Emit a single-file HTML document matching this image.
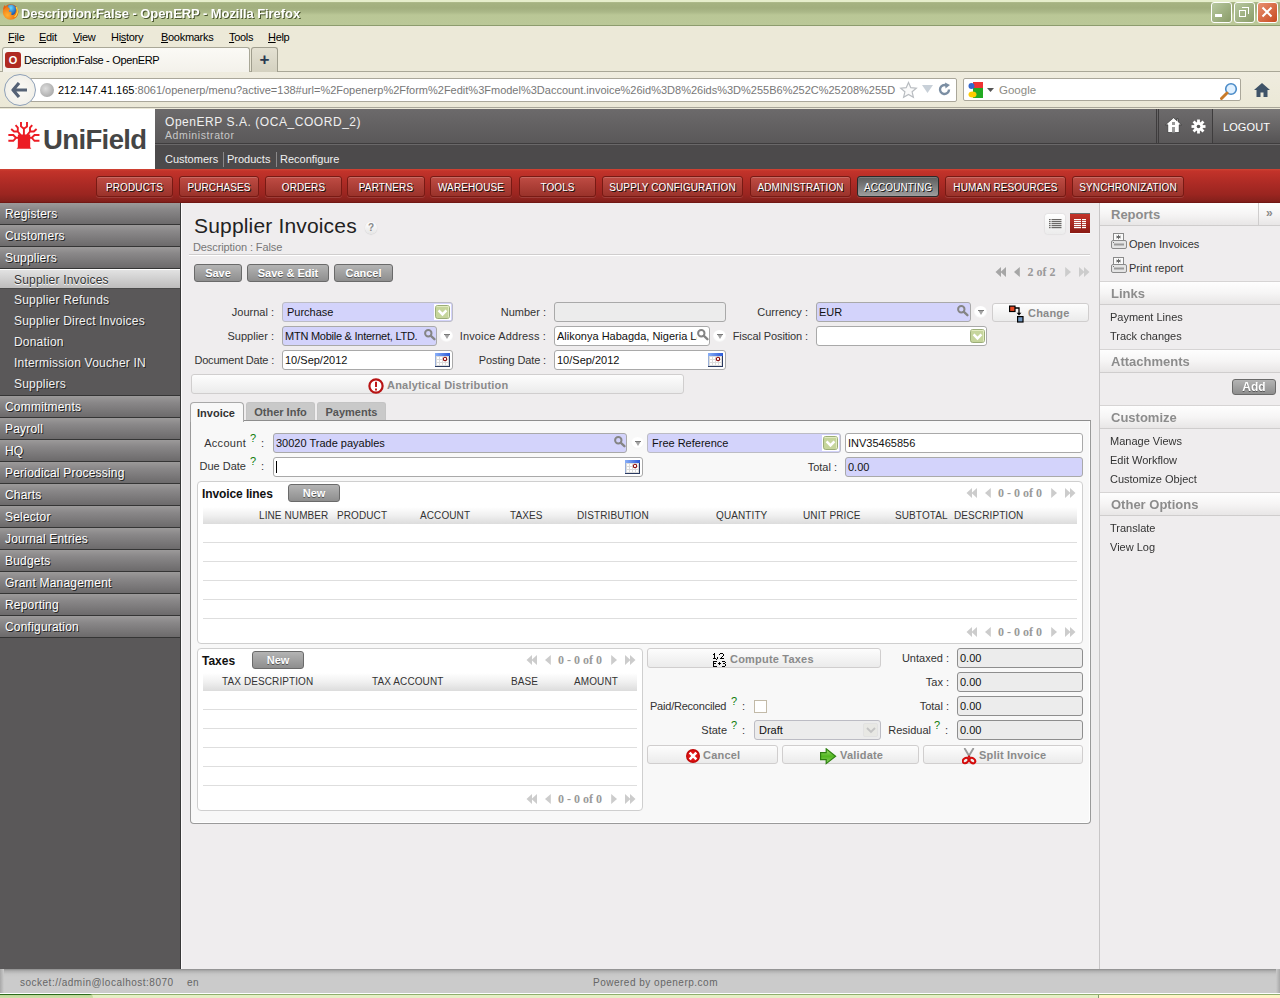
<!DOCTYPE html>
<html><head><meta charset="utf-8">
<style>
*{margin:0;padding:0;box-sizing:border-box}
html,body{width:1280px;height:998px;overflow:hidden;background:#efedee;font-family:"Liberation Sans",sans-serif;font-size:12px;color:#333}
.abs{position:absolute}
#titlebar{position:absolute;left:0;top:0;width:1280px;height:26px;background:linear-gradient(#e6eecc 0,#e6eecc 2px,#b4c092 2px,#a5b281 3px,#a2af7e 8px,#abb888 12px,#bac796 15px,#bbc898 25px);border-bottom:1px solid #8d9c6e}
#menubar{position:absolute;left:0;top:26px;width:1280px;height:22px;background:#ece9d8}
#tabstrip{position:absolute;left:0;top:47px;width:1280px;height:26px;background:#ece9d8}
#navbar{position:absolute;left:0;top:72px;width:1280px;height:37px;background:linear-gradient(#efecdf,#ebe8d6);}
#header{position:absolute;left:0;top:109px;width:1280px;height:60px;background:#4f4d4e}
#logo{position:absolute;left:0;top:0;width:155px;height:60px;background:#fff}
#hdrtop{position:absolute;left:155px;top:0;width:1125px;height:35px;background:linear-gradient(#6c6a6b,#5a5859);border-bottom:1px solid #3f3d3e}
#hdrbot{position:absolute;left:155px;top:35px;width:1125px;height:25px;background:#4c4a4b;border-top:1px solid #6a6869}
#redbar{position:absolute;left:0;top:169px;width:1280px;height:34px;background:linear-gradient(#d24434 0,#c3332a 2px,#ae2b25 40%,#9a2520 75%,#84201b 95%,#6a1410 100%)}
#left{position:absolute;left:0;top:203px;width:181px;height:766px;background:#5a5859;border-right:1px solid #383838}
.lm{position:relative;height:22px;border-bottom:1px solid #353535;background:linear-gradient(#9c9a9a,#8a8889 30%,#6c6a6b);color:#fff;font-size:12px;padding-left:5px;line-height:23px;letter-spacing:0.2px;text-shadow:1px 1px 0 #222;white-space:nowrap}
.ls{position:relative;height:21px;color:#f2f2f2;font-size:12px;padding-left:14px;line-height:23px;letter-spacing:0.2px;text-shadow:1px 1px 0 #2a2a2a;white-space:nowrap}
.ls.sel{height:20px;margin-top:0;border-top:1px solid #fff;background:linear-gradient(#e2e2e2,#bdbcbc);color:#333;text-shadow:0 1px 0 #fff;line-height:21px;border-bottom:1px solid #4a4a4a}
#content{position:absolute;left:181px;top:203px;width:918px;height:766px;background:#efedee;border-left:1px solid #fdfbfc}
#right{position:absolute;left:1099px;top:203px;width:181px;height:766px;background:#efedee;border-left:1px solid #c8c6c7}
#footer{position:absolute;left:0;top:969px;width:1280px;height:25px;background:linear-gradient(#8c8c8c 0,#b0b0b0 2px,#c6c6c6 5px,#cbcbcb 8px,#cbcbcb 100%);border-bottom:1px solid #fff}
#taskbar{position:absolute;left:0;top:994px;width:1280px;height:4px;background:#e6efc6;border-top:1px solid #8fae6c}
.wbtn{position:absolute;top:2px;width:21px;height:21px;border:1.5px solid #fff;border-radius:3px}
.mi{position:absolute;top:5px;font-size:11px;color:#000;letter-spacing:-0.3px}
.mb{position:absolute;top:7px;height:21px;border:1px solid #781a14;border-radius:3px;background:linear-gradient(#bf4c44,#9a322a);box-shadow:inset 0 1px 0 rgba(255,255,255,0.18),0 1px 0 rgba(255,255,255,0.12);color:#fff;font:10px 'Liberation Sans',sans-serif;text-align:center;line-height:21px;text-shadow:1px 1px 0 #111;white-space:nowrap;letter-spacing:0.1px}
.mb.act{background:linear-gradient(#5c5c5c,#9e9e9e);border-color:#2a2a2a}
.rh{position:absolute;left:0;width:181px;height:24px;border-top:1px solid #d6d4d4;border-bottom:1px solid #cfcdcd;background:linear-gradient(#fefefe,#f6f5f5 50%,#e8e6e6);font:bold 13px 'Liberation Sans',sans-serif;color:#8c8c8c;padding-left:11px;line-height:23px;letter-spacing:0px}
.ri{position:absolute;font-size:11px;color:#333;white-space:nowrap}
.btn{position:absolute;border:1px solid #6a6a6a;border-radius:3px;background:linear-gradient(#b4b4b4,#8e8e8e);color:#fff;font:bold 12px 'Liberation Sans',sans-serif;text-align:center;text-shadow:0 1px 0 #555;white-space:nowrap}
.lb{position:absolute;font-size:11px;color:#333;white-space:nowrap}
.q2{color:#0c7c0c}
.q{color:#1a8a1a;font-size:11px;position:relative;top:-3px;margin-left:6px}
.in{position:absolute;border:1px solid #a9a9a9;border-radius:3px;font-size:11px;color:#111;padding:3px 0 0 2px;white-space:nowrap;overflow:visible}
.in.lav{background:#d3d3fb}
.in.sel{padding-left:4px;border-color:#bcbcc4}
.in.wh{background:#fff}
.in.ro{background:#ececec}
.in.ro2{background:#ececec;border-color:#8e8e8e}
.ddc{width:13px;height:12px;border-radius:50%;background:radial-gradient(circle at 50% 40%,#fff 55%,#ececec 85%,#dcdcdc);}
.gsel{width:16px;height:15px;background:linear-gradient(#b4c898,#8fa872);border:1px solid #dfe8d4;border-radius:1px}
.pg{width:112px;height:12px}
.pgt{font:bold 12px 'Liberation Serif',serif;color:#9a9a9a;white-space:nowrap}
.abtn{position:absolute;border:1px solid #d0cece;border-radius:3px;background:linear-gradient(#fdfdfd,#ebebeb);font:bold 11px 'Liberation Sans',sans-serif;color:#8a8a8a;white-space:nowrap;letter-spacing:0.2px}
.tab{border:1px solid #c4c4c4;border-bottom:none;border-radius:3px 3px 0 0;background:#c9c9c9;font:bold 11px 'Liberation Sans',sans-serif;color:#555;text-align:center;line-height:19px}
.tab.act{background:#f8f8f8;border-color:#a8a8a8;color:#333;line-height:22px;border-radius:4px 4px 0 0}
.box{border:1px solid #cfcfcf;border-radius:4px;background:#fff}
.thd{background:linear-gradient(#fff,#f0f0f0 50%,#dcdcdc)}
.th{font-size:10px;color:#333;letter-spacing:0.1px;white-space:nowrap}
.ft{font-size:10px;color:#666;letter-spacing:0.5px;white-space:nowrap}
</style></head><body><div id="wrap" style="position:absolute;left:0;top:0;width:1280px;height:998px;overflow:hidden;will-change:transform">
<div id="titlebar">
 <svg class="abs" style="left:2px;top:4px" width="17" height="16" viewBox="0 0 17 16"><defs><radialGradient id="fo" cx="0.3" cy="0.7" r="0.8"><stop offset="0" stop-color="#ffb030"/><stop offset="0.6" stop-color="#f07a18"/><stop offset="1" stop-color="#c8400a"/></radialGradient><radialGradient id="gb" cx="0.4" cy="0.3" r="0.7"><stop offset="0" stop-color="#6ad8ff"/><stop offset="1" stop-color="#1a58b0"/></radialGradient></defs><circle cx="8.6" cy="8" r="7.8" fill="url(#fo)"/><path d="M5.5 2.2C7 0.4 11 0.2 13.2 2.4 14.6 4.2 14.2 8 12.6 10 11 11.6 8.5 11 9.4 9.4 10.2 8 8.6 7.4 7.2 7.8 6.2 6.8 7.4 5.2 8.2 5.4 7.6 4 6.2 3.6 5.5 2.2Z" fill="url(#gb)"/><path d="M14.2 3.2C16.2 6.2 15.6 10.6 12.6 13" stroke="#ffd840" stroke-width="1.4" fill="none"/><path d="M1.2 6C1 3.5 2 2 3 1L3.6 3.4Z" fill="#e86010"/></svg>
 <div class="abs" style="left:21px;top:6px;font:bold 13px 'Liberation Sans',sans-serif;color:#fff;text-shadow:1px 1px 0 #4a5530;letter-spacing:-0.07px">Description:False - OpenERP - Mozilla Firefox</div>
 <div class="wbtn" style="left:1211px;background:linear-gradient(135deg,#b8c8a0,#8a9c68)"><div class="abs" style="left:3px;top:11px;width:7px;height:3px;background:#fff"></div></div>
 <div class="wbtn" style="left:1234px;background:linear-gradient(135deg,#b8c8a0,#8a9c68)"><div class="abs" style="left:3.5px;top:7px;width:7.5px;height:7px;border:1.5px solid #fff"></div><div class="abs" style="left:6.5px;top:4px;width:7.5px;height:7px;border-top:1.5px solid #fff;border-right:1.5px solid #fff"></div></div>
 <div class="wbtn" style="left:1257px;background:linear-gradient(135deg,#e89070,#c84a20)"><svg class="abs" style="left:2px;top:2px" width="14" height="14"><path d="M2.5 2.5L11.5 11.5M11.5 2.5L2.5 11.5" stroke="#fff" stroke-width="2"/></svg></div></div>
</div>
<div id="menubar">
 <span class="mi" style="left:8px"><u>F</u>ile</span><span class="mi" style="left:39px"><u>E</u>dit</span><span class="mi" style="left:73px"><u>V</u>iew</span><span class="mi" style="left:111px">Hi<u>s</u>tory</span><span class="mi" style="left:161px"><u>B</u>ookmarks</span><span class="mi" style="left:229px"><u>T</u>ools</span><span class="mi" style="left:268px"><u>H</u>elp</span>
</div>
<div id="tabstrip">
 <div class="abs" style="left:0;top:0;width:1280px;height:25px;border-bottom:1px solid #a9a797"></div>
 <div class="abs" style="left:2px;top:0;width:248px;height:26px;background:linear-gradient(#fbfaf6,#f3f1ea);border:1px solid #a9a797;border-bottom:none;border-radius:3px 3px 0 0"></div>
 <div class="abs" style="left:5px;top:5px;width:16px;height:16px;background:#b02a22;border-radius:3px;color:#fff;font:bold 11px 'Liberation Sans',sans-serif;text-align:center;line-height:16px">O</div>
 <div class="abs" style="left:24px;top:7px;font-size:11px;color:#000;letter-spacing:-0.33px">Description:False - OpenERP</div>
 <div class="abs" style="left:251px;top:0px;width:27px;height:25px;background:linear-gradient(#e4e1d2,#d4d1c0);border:1px solid #a09e8e;border-bottom:none;border-radius:3px 3px 0 0;color:#2a3a50;font:bold 17px 'Liberation Sans',sans-serif;text-align:center;line-height:23px">+</div>
</div>
<div id="navbar">
 <div class="abs" style="left:30px;top:6px;width:927px;height:24px;background:#fff;border:1px solid #aaa79a;border-radius:0 2px 2px 0"></div>
 <div class="abs" style="left:4px;top:2px;width:32px;height:32px;border-radius:50%;background:radial-gradient(#fbfaf6,#eeece4);border:1px solid #8ea0b8"></div>
 <svg class="abs" style="left:11px;top:10px" width="18" height="16"><path d="M8 1L2 8L8 15M2 8H16" stroke="#556275" stroke-width="3.2" fill="none" stroke-linejoin="round"/></svg>
 <div class="abs" style="left:40px;top:11px;width:14px;height:14px;border-radius:50%;background:radial-gradient(circle at 40% 40%,#ddd,#9a9a9a)"></div>
 <div class="abs" style="left:58px;top:12px;font-size:11px;color:#000;white-space:nowrap;width:838px;overflow:hidden">212.147.41.165<span style="color:#777">:8061/openerp/menu?active=138#url=%2Fopenerp%2Fform%2Fedit%3Fmodel%3Daccount.invoice%26id%3D8%26ids%3D%255B6%252C%25208%255D</span></div>
 <svg class="abs" style="left:899px;top:9px" width="19" height="18"><path d="M9.5 1.5L11.8 6.7 17.3 7.2 13.1 10.8 14.4 16.3 9.5 13.4 4.6 16.3 5.9 10.8 1.7 7.2 7.2 6.7Z" fill="#fafafa" stroke="#b8bcc0" stroke-width="1.2"/></svg>
 <svg class="abs" style="left:922px;top:13px" width="11" height="9"><path d="M0 0H11L5.5 8Z" fill="#c8d0d8"/></svg>
 <svg class="abs" style="left:937px;top:10px" width="15" height="15"><path d="M12 7.5A4.5 4.5 0 1 1 9.5 3.5" stroke="#7b8ea3" stroke-width="2.4" fill="none"/><path d="M8 0.5L13 3 8.5 6.5Z" fill="#7b8ea3"/></svg>
 <div class="abs" style="left:963px;top:6px;width:278px;height:23px;background:#fff;border:1px solid #aaa79a;border-radius:2px"></div>
 <svg class="abs" style="left:968px;top:10px" width="16" height="16"><rect x="5" y="0" width="10" height="9" fill="#e33"/><rect x="5" y="6" width="10" height="10" fill="#2a2"/><circle cx="3.5" cy="4" r="3" fill="#36c"/><ellipse cx="4.5" cy="12.5" rx="4" ry="3" fill="#fc0"/></svg>
 <svg class="abs" style="left:987px;top:16px" width="7" height="4"><path d="M0 0H7L3.5 4Z" fill="#555"/></svg>
 <div class="abs" style="left:999px;top:12px;font-size:11.5px;color:#8c8c84">Google</div>
 <svg class="abs" style="left:1220px;top:10px" width="18" height="18"><circle cx="11" cy="7" r="5.3" fill="#dff0ff" stroke="#4a8bc8" stroke-width="1.6"/><path d="M7 11L1.5 16.5" stroke="#c87a28" stroke-width="3" stroke-linecap="round"/></svg>
 <svg class="abs" style="left:1254px;top:11px" width="16" height="14"><path d="M8 0L0 7H2.5V14H6.5V9.5H9.5V14H13.5V7H16Z" fill="#3f5368"/></svg>
 <div class="abs" style="left:0;top:35px;width:1280px;height:1px;background:#a8a598"></div>
</div>
<div id="header"><div id="logo">
 <svg class="abs" style="left:5px;top:11px" width="40" height="32" viewBox="0 0 40 32"><g fill="none" stroke="#ec1c24" stroke-width="1.9" stroke-linecap="square" stroke-linejoin="miter"><path d="M16 3V6.4L18.9 8.7V15M22 3V6.4L18.9 8.7"/><path d="M11.2 5.9L12.8 7.7V11.5L15.2 14.6M12.8 11.5H9L6.9 9.6"/><path d="M26.6 5.9L25 7.7V11.5L22.6 14.6M25 11.5H28.8L30.9 9.6"/><path d="M4.3 15H8.3L11 17.8L8.3 20.8H4.3M11 17.8H13.5"/><path d="M33.5 15H29.5L26.8 17.8L29.5 20.8H33.5M26.8 17.8H24.5"/></g><path d="M12.9 14.6H25.2L25.2 27.3L26.4 28.8H11.6L12.8 27.3Z" fill="#ec1c24"/></svg>
 <div class="abs" style="left:43px;top:124px;top:15px;font:bold 27.5px 'Liberation Sans',sans-serif;color:#454545;letter-spacing:-0.62px">UniField</div>
</div>
<div id="hdrtop">
 <div class="abs" style="left:10px;top:6px;font-size:12px;color:#f0f0f0;letter-spacing:0.55px;white-space:nowrap">OpenERP S.A. (OCA_COORD_2)</div>
 <div class="abs" style="left:10px;top:20px;font-size:10.5px;color:#c8c8c8;letter-spacing:0.6px">Administrator</div>
 <div class="abs" style="left:1001px;top:0;width:1px;height:35px;background:#3e3c3d"></div>
 <div class="abs" style="left:1003px;top:0;width:1px;height:35px;background:#3e3c3d"></div>
 <div class="abs" style="left:1057px;top:0;width:1px;height:35px;background:#3e3c3d"></div>
 <div class="abs" style="left:1058px;top:0;width:67px;height:34px;background:linear-gradient(#7a7878,#555354)"></div>
 <svg class="abs" style="left:1010px;top:8px" width="17" height="17" viewBox="0 0 17 17"><path d="M8.5 0.8L0.5 7.8H2.8V15.5H14.2V7.8H16.5L13 4.6V1.5H12V3.7Z" fill="#fff" stroke="#222" stroke-width="0.6"/><rect x="7" y="10" width="3" height="5.5" fill="#999"/><rect x="7" y="5" width="3" height="3" fill="#999"/></svg>
 <svg class="abs" style="left:1036px;top:10px" width="15" height="15" viewBox="0 0 15 15"><g transform="translate(7.5 7.5)"><circle r="4.6" fill="#fff"/><g fill="#fff"><rect x="-1.4" y="-7" width="2.8" height="14"/><rect x="-1.4" y="-7" width="2.8" height="14" transform="rotate(45)"/><rect x="-1.4" y="-7" width="2.8" height="14" transform="rotate(90)"/><rect x="-1.4" y="-7" width="2.8" height="14" transform="rotate(135)"/></g><circle r="1.8" fill="#555"/></g></svg>
 <div class="abs" style="left:1068px;top:12px;font-size:11px;color:#fff;letter-spacing:0.1px">LOGOUT</div>
</div>
<div id="hdrbot">
 <div class="abs" style="left:10px;top:8px;font-size:11px;color:#f0f0f0;white-space:nowrap">Customers</div>
 <div class="abs" style="left:68px;top:7px;width:1px;height:15px;background:#8a8889"></div>
 <div class="abs" style="left:72px;top:8px;font-size:11px;color:#f0f0f0">Products</div>
 <div class="abs" style="left:121px;top:7px;width:1px;height:15px;background:#8a8889"></div>
 <div class="abs" style="left:125px;top:8px;font-size:11px;color:#f0f0f0">Reconfigure</div>
</div></div>
<div id="redbar">
 <div class="mb" style="left:96px;width:77px">PRODUCTS</div>
 <div class="mb" style="left:179px;width:80px">PURCHASES</div>
 <div class="mb" style="left:265px;width:77px">ORDERS</div>
 <div class="mb" style="left:347px;width:78px">PARTNERS</div>
 <div class="mb" style="left:430px;width:82px">WAREHOUSE</div>
 <div class="mb" style="left:519px;width:77px">TOOLS</div>
 <div class="mb" style="left:602px;width:141px">SUPPLY CONFIGURATION</div>
 <div class="mb" style="left:750px;width:101px">ADMINISTRATION</div>
 <div class="mb act" style="left:857px;width:82px">ACCOUNTING</div>
 <div class="mb" style="left:945px;width:121px">HUMAN RESOURCES</div>
 <div class="mb" style="left:1072px;width:112px">SYNCHRONIZATION</div>
</div>
<div id="left">
<div class="lm">Registers</div><div class="lm">Customers</div><div class="lm">Suppliers</div>
<div class="ls sel">Supplier Invoices</div><div class="ls">Supplier Refunds</div><div class="ls">Supplier Direct Invoices</div><div class="ls">Donation</div><div class="ls">Intermission Voucher IN</div><div class="ls">Suppliers</div><div style="height:1px"></div><div style="height:1px;background:#353535"></div>
<div class="lm">Commitments</div><div class="lm">Payroll</div><div class="lm">HQ</div><div class="lm">Periodical Processing</div><div class="lm">Charts</div><div class="lm">Selector</div><div class="lm">Journal Entries</div><div class="lm">Budgets</div><div class="lm">Grant Management</div><div class="lm">Reporting</div><div class="lm">Configuration</div>
</div>
<div id="content"></div>
<div class="abs" style="left:194px;top:214px;font-size:21px;color:#222;letter-spacing:0.17px;white-space:nowrap">Supplier Invoices</div>
<div class="abs" style="left:365px;top:222px;width:12px;height:12px;border-radius:50%;background:linear-gradient(#fff,#e6e6e6);box-shadow:0 0.5px 1px #c8c8c8;font:bold 10px 'Liberation Sans',sans-serif;color:#8a8a8a;text-align:center;line-height:12px">?</div>
<div class="abs" style="left:193px;top:241px;font-size:11px;color:#777;letter-spacing:-0.1px">Description : False</div>
<div class="abs" style="left:189px;top:254px;width:901px;height:1px;background:#cfcdcd"></div>
<div class="abs" style="left:189px;top:255px;width:901px;height:1px;background:#fff"></div>
<div class="btn" style="left:194px;top:264px;width:48px;height:18px;line-height:17px;font-size:11px">Save</div>
<div class="btn" style="left:247px;top:264px;width:82px;height:18px;line-height:17px;font-size:11px">Save &amp; Edit</div>
<div class="btn" style="left:334px;top:264px;width:59px;height:18px;line-height:17px;font-size:11px">Cancel</div>
<div class="abs" style="left:1045px;top:214px;width:20px;height:20px;border-radius:3px;background:linear-gradient(#fff,#ececec);box-shadow:0 0 1.5px #bbb"><svg class="abs" style="left:4px;top:5px" width="13" height="10"><g fill="#6a6866"><rect x="0" y="0" width="1.6" height="1.2"/><rect x="2.5" y="0" width="10" height="1.2"/><rect x="0" y="2" width="1.6" height="1.2"/><rect x="2.5" y="2" width="10" height="1.2"/><rect x="0" y="4" width="1.6" height="1.2"/><rect x="2.5" y="4" width="10" height="1.2"/><rect x="0" y="6" width="1.6" height="1.2"/><rect x="2.5" y="6" width="10" height="1.2"/><rect x="0" y="8" width="1.6" height="1.2"/><rect x="2.5" y="8" width="10" height="1.2"/></g></svg></div><div class="abs" style="left:1070px;top:213px;width:20px;height:20px;border-top:1px solid #6a7070;background:linear-gradient(#c4342a,#8a1a14);box-shadow:0 1px 0 #fff"><svg class="abs" style="left:4px;top:5px" width="13" height="10"><g fill="#fff"><rect x="0" y="0" width="7" height="1.2"/><rect x="8" y="0" width="4" height="1.2"/><rect x="0" y="2" width="7" height="1.2"/><rect x="8" y="2" width="4" height="1.2"/><rect x="0" y="4" width="7" height="1.2"/><rect x="8" y="4" width="4" height="1.2"/><rect x="0" y="6" width="7" height="1.2"/><rect x="8" y="6" width="4" height="1.2"/><rect x="0" y="8" width="7" height="1.2"/><rect x="8" y="8" width="4" height="1.2"/></g></svg></div>
<div class="abs pg" style="left:995px;top:267px"><svg class="abs" style="left:0;top:0" width="12" height="10"><path d="M0.5 5L6 0V10Z M5.5 5L11 0V10Z" fill="#a6a6a6"/></svg><svg class="abs" style="left:19px;top:0" width="6" height="10"><path d="M0 5L5.8 0V10Z" fill="#a6a6a6"/></svg><div class="abs pgt" style="left:32.5px;top:-2px">2 of 2</div><svg class="abs" style="left:70px;top:0" width="6" height="10"><path d="M6 5L0.2 0V10Z" fill="#cccccc"/></svg><svg class="abs" style="left:84px;top:0" width="11" height="10"><path d="M10.5 5L5 0V10Z M5.5 5L0 0V10Z" fill="#cccccc"/></svg></div>
<div class="lb" style="right:1006px;top:306px">Journal :</div>
<div class="in lav sel" style="left:282px;top:302px;width:171px;height:20px">Purchase<svg class="abs" style="left:151px;top:1px" width="17" height="16" viewBox="0 0 17 16"><rect width="17" height="16" fill="#fff"/><rect x="1.5" y="1.5" width="14" height="13" rx="2.2" fill="#c6d59c" stroke="#9bad78"/><path d="M2.5 2.5H14.5V13.5" stroke="#e2ebc0" stroke-width="1" fill="none"/><path d="M4.6 6.4L8.5 10.4L12.4 6.4" stroke="#fff" stroke-width="2.5" fill="none"/></svg></div>
<div class="lb" style="right:734px;top:306px">Number :</div>
<div class="in ro" style="left:554px;top:302px;width:172px;height:20px"></div>
<div class="lb" style="right:472px;top:306px">Currency :</div>
<div class="in lav" style="left:816px;top:302px;width:155px;height:20px">EUR<svg class="abs" style="left:140px;top:2px" width="12" height="12" viewBox="0 0 12 12"><circle cx="4.3" cy="4.3" r="3.2" fill="none" stroke="#858585" stroke-width="2"/><path d="M6.9 6.9L10.4 10.2" stroke="#858585" stroke-width="2.3" stroke-linecap="round"/></svg></div>
<div class="abs ddc" style="left:974px;top:306px"><svg class="abs" style="left:4px;top:4px" width="6" height="5"><path d="M0 0H6L3 5Z" fill="#a4a4a4"/><rect x="0" y="0" width="6" height="1" fill="#7a7a7a"/></svg></div>
<div class="abtn" style="left:992px;top:303px;width:97px;height:19px"><svg class="abs" style="left:16px;top:1px" width="16" height="18"><rect x="0.6" y="1.1" width="5.4" height="5.4" fill="#e84a24" stroke="#000" stroke-width="1.2"/><path d="M6 3H10V8.5" stroke="#000" stroke-width="1.3" fill="none"/><path d="M7.6 7.8L10 10.6L12.4 7.8Z" fill="#000"/><rect x="8.6" y="11.6" width="5.4" height="5.4" fill="#7096c0" stroke="#000" stroke-width="1.2"/></svg><span style="position:absolute;left:35px;top:3px">Change</span></div>
<div class="lb" style="right:1006px;top:330px">Supplier :</div>
<div class="in lav" style="left:282px;top:326px;width:155px;height:20px"><span style="letter-spacing:-0.25px">MTN Mobile &amp; Internet, LTD.</span><svg class="abs" style="left:141px;top:2px" width="12" height="12" viewBox="0 0 12 12"><circle cx="4.3" cy="4.3" r="3.2" fill="none" stroke="#858585" stroke-width="2"/><path d="M6.9 6.9L10.4 10.2" stroke="#858585" stroke-width="2.3" stroke-linecap="round"/></svg></div>
<div class="abs ddc" style="left:440px;top:330px"><svg class="abs" style="left:4px;top:4px" width="6" height="5"><path d="M0 0H6L3 5Z" fill="#a4a4a4"/><rect x="0" y="0" width="6" height="1" fill="#7a7a7a"/></svg></div>
<div class="lb" style="right:734px;top:330px;letter-spacing:0.15px">Invoice Address :</div>
<div class="in wh" style="left:554px;top:326px;width:156px;height:20px"><span style="display:inline-block;width:140px;overflow:hidden;white-space:nowrap;vertical-align:top">Alikonya Habagda, Nigeria Lagos</span><svg class="abs" style="left:142px;top:2px" width="12" height="12" viewBox="0 0 12 12"><circle cx="4.3" cy="4.3" r="3.2" fill="none" stroke="#858585" stroke-width="2"/><path d="M6.9 6.9L10.4 10.2" stroke="#858585" stroke-width="2.3" stroke-linecap="round"/></svg></div>
<div class="abs ddc" style="left:713px;top:330px"><svg class="abs" style="left:4px;top:4px" width="6" height="5"><path d="M0 0H6L3 5Z" fill="#a4a4a4"/><rect x="0" y="0" width="6" height="1" fill="#7a7a7a"/></svg></div>
<div class="lb" style="right:472px;top:330px;letter-spacing:-0.1px">Fiscal Position :</div>
<div class="in wh" style="left:816px;top:326px;width:171px;height:20px"><svg class="abs" style="left:152px;top:1px" width="17" height="16" viewBox="0 0 17 16"><rect width="17" height="16" fill="#fff"/><rect x="1.5" y="1.5" width="14" height="13" rx="2.2" fill="#c6d59c" stroke="#9bad78"/><path d="M2.5 2.5H14.5V13.5" stroke="#e2ebc0" stroke-width="1" fill="none"/><path d="M4.6 6.4L8.5 10.4L12.4 6.4" stroke="#fff" stroke-width="2.5" fill="none"/></svg></div>
<div class="lb" style="right:1006px;top:354px;letter-spacing:-0.2px">Document Date :</div>
<div class="in wh" style="left:282px;top:350px;width:171px;height:20px">10/Sep/2012<svg class="abs" style="left:152px;top:2px" width="15" height="14" viewBox="0 0 15 14"><defs><linearGradient id="cb1522" x1="0" y1="0" x2="1" y2="0"><stop offset="0" stop-color="#8ab0f8"/><stop offset="1" stop-color="#2a5ad8"/></linearGradient></defs><rect width="15" height="14" fill="#dcdcdc"/><g fill="#fff"><rect x="2" y="4" width="2" height="2"/><rect x="5" y="4" width="2" height="2"/><rect x="8" y="4" width="2" height="2"/><rect x="11" y="4" width="2" height="2"/><rect x="2" y="7" width="2" height="2"/><rect x="5" y="7" width="2" height="2"/><rect x="8" y="7" width="2" height="2"/><rect x="11" y="7" width="2" height="2"/><rect x="2" y="10" width="2" height="2"/><rect x="5" y="10" width="2" height="2"/><rect x="8" y="10" width="2" height="2"/><rect x="11" y="10" width="2" height="2"/></g><rect width="15" height="3" fill="url(#cb1522)"/><rect x="0" y="3" width="1" height="11" fill="#9ab0d8"/><rect x="14" y="3" width="1" height="11" fill="#2a3a60"/><rect x="0" y="13" width="15" height="1" fill="#2a3a60"/><circle cx="10" cy="6" r="1.7" fill="#fff" stroke="#8a0808" stroke-width="1.1"/></svg></div>
<div class="lb" style="right:734px;top:354px;letter-spacing:-0.14px">Posting Date :</div>
<div class="in wh" style="left:554px;top:350px;width:172px;height:20px">10/Sep/2012<svg class="abs" style="left:153px;top:2px" width="15" height="14" viewBox="0 0 15 14"><defs><linearGradient id="cb1532" x1="0" y1="0" x2="1" y2="0"><stop offset="0" stop-color="#8ab0f8"/><stop offset="1" stop-color="#2a5ad8"/></linearGradient></defs><rect width="15" height="14" fill="#dcdcdc"/><g fill="#fff"><rect x="2" y="4" width="2" height="2"/><rect x="5" y="4" width="2" height="2"/><rect x="8" y="4" width="2" height="2"/><rect x="11" y="4" width="2" height="2"/><rect x="2" y="7" width="2" height="2"/><rect x="5" y="7" width="2" height="2"/><rect x="8" y="7" width="2" height="2"/><rect x="11" y="7" width="2" height="2"/><rect x="2" y="10" width="2" height="2"/><rect x="5" y="10" width="2" height="2"/><rect x="8" y="10" width="2" height="2"/><rect x="11" y="10" width="2" height="2"/></g><rect width="15" height="3" fill="url(#cb1532)"/><rect x="0" y="3" width="1" height="11" fill="#9ab0d8"/><rect x="14" y="3" width="1" height="11" fill="#2a3a60"/><rect x="0" y="13" width="15" height="1" fill="#2a3a60"/><circle cx="10" cy="6" r="1.7" fill="#fff" stroke="#8a0808" stroke-width="1.1"/></svg></div>
<div class="abtn" style="left:191px;top:374px;width:493px;height:20px"><svg class="abs" style="left:176px;top:3px" width="16" height="16"><circle cx="8" cy="8" r="6.6" fill="#fff" stroke="#b81414" stroke-width="2.2"/><path d="M8 3.8V9" stroke="#c01818" stroke-width="2" /><rect x="7" y="10.5" width="2" height="2" fill="#c01818"/></svg><span style="position:absolute;left:195px;top:4px">Analytical Distribution</span></div>
<div class="abs" style="left:190px;top:420px;width:901px;height:404px;border:1px solid #9a9a9a;border-top-color:#8e8e8e;background:#f8f8f8;border-radius:0 0 4px 4px;box-shadow:inset -1px -1px 0 #fff"></div>
<div class="abs tab" style="left:246px;top:402px;width:69px;height:18px">Other Info</div>
<div class="abs tab" style="left:317px;top:402px;width:69px;height:18px">Payments</div>
<div class="abs tab act" style="left:190px;top:402px;width:54px;height:20px;text-indent:-2px;line-height:20px">Invoice</div>
<div class="lb" style="right:1034px;top:437px;letter-spacing:0.3px">Account</div><div class="lb q2" style="left:250px;top:432px">?</div><div class="lb" style="left:261px;top:437px">:</div>
<div class="in lav" style="left:273px;top:433px;width:354px;height:20px">30020 Trade payables<svg class="abs" style="left:340px;top:2px" width="12" height="12" viewBox="0 0 12 12"><circle cx="4.3" cy="4.3" r="3.2" fill="none" stroke="#858585" stroke-width="2"/><path d="M6.9 6.9L10.4 10.2" stroke="#858585" stroke-width="2.3" stroke-linecap="round"/></svg></div>
<div class="abs ddc" style="left:631px;top:437px"><svg class="abs" style="left:4px;top:4px" width="6" height="5"><path d="M0 0H6L3 5Z" fill="#a4a4a4"/><rect x="0" y="0" width="6" height="1" fill="#7a7a7a"/></svg></div>
<div class="in lav sel" style="left:647px;top:433px;width:194px;height:20px">Free Reference<svg class="abs" style="left:174px;top:1px" width="17" height="16" viewBox="0 0 17 16"><rect width="17" height="16" fill="#fff"/><rect x="1.5" y="1.5" width="14" height="13" rx="2.2" fill="#c6d59c" stroke="#9bad78"/><path d="M2.5 2.5H14.5V13.5" stroke="#e2ebc0" stroke-width="1" fill="none"/><path d="M4.6 6.4L8.5 10.4L12.4 6.4" stroke="#fff" stroke-width="2.5" fill="none"/></svg></div>
<div class="in wh" style="left:845px;top:433px;width:238px;height:20px">INV35465856</div>
<div class="lb" style="right:1034px;top:460px">Due Date</div><div class="lb q2" style="left:250px;top:455px">?</div><div class="lb" style="left:261px;top:460px">:</div>
<div class="in wh" style="left:273px;top:457px;width:370px;height:20px"><span style="display:inline-block;width:1px;height:12px;background:#000;vertical-align:-2px"></span><svg class="abs" style="left:351px;top:2px" width="15" height="14" viewBox="0 0 15 14"><defs><linearGradient id="cb3513" x1="0" y1="0" x2="1" y2="0"><stop offset="0" stop-color="#8ab0f8"/><stop offset="1" stop-color="#2a5ad8"/></linearGradient></defs><rect width="15" height="14" fill="#dcdcdc"/><g fill="#fff"><rect x="2" y="4" width="2" height="2"/><rect x="5" y="4" width="2" height="2"/><rect x="8" y="4" width="2" height="2"/><rect x="11" y="4" width="2" height="2"/><rect x="2" y="7" width="2" height="2"/><rect x="5" y="7" width="2" height="2"/><rect x="8" y="7" width="2" height="2"/><rect x="11" y="7" width="2" height="2"/><rect x="2" y="10" width="2" height="2"/><rect x="5" y="10" width="2" height="2"/><rect x="8" y="10" width="2" height="2"/><rect x="11" y="10" width="2" height="2"/></g><rect width="15" height="3" fill="url(#cb3513)"/><rect x="0" y="3" width="1" height="11" fill="#9ab0d8"/><rect x="14" y="3" width="1" height="11" fill="#2a3a60"/><rect x="0" y="13" width="15" height="1" fill="#2a3a60"/><circle cx="10" cy="6" r="1.7" fill="#fff" stroke="#8a0808" stroke-width="1.1"/></svg></div>
<div class="lb" style="right:443px;top:461px">Total :</div>
<div class="in lav" style="left:845px;top:457px;width:238px;height:20px">0.00</div>
<div class="abs box" style="left:197px;top:481px;width:886px;height:163px"></div>
<div class="abs" style="left:202px;top:487px;font:bold 12px 'Liberation Sans',sans-serif;color:#111;letter-spacing:-0.1px">Invoice lines</div>
<div class="btn" style="left:288px;top:484px;width:52px;height:18px;line-height:17px;font-size:11px">New</div>
<div class="abs pg" style="left:966px;top:488px"><svg class="abs" style="left:0;top:0" width="12" height="10"><path d="M0.5 5L6 0V10Z M5.5 5L11 0V10Z" fill="#cccccc"/></svg><svg class="abs" style="left:18.5px;top:0" width="6" height="10"><path d="M0 5L5.8 0V10Z" fill="#cccccc"/></svg><div class="abs pgt" style="left:32px;top:-2px">0 - 0 of 0</div><svg class="abs" style="left:85px;top:0" width="6" height="10"><path d="M6 5L0.2 0V10Z" fill="#cccccc"/></svg><svg class="abs" style="left:99px;top:0" width="11" height="10"><path d="M10.5 5L5 0V10Z M5.5 5L0 0V10Z" fill="#cccccc"/></svg></div>
<div class="abs thd" style="left:203px;top:507px;width:874px;height:17px"></div>
<div class="abs th" style="left:259px;top:510px">LINE NUMBER</div>
<div class="abs th" style="left:337px;top:510px">PRODUCT</div>
<div class="abs th" style="left:420px;top:510px">ACCOUNT</div>
<div class="abs th" style="left:510px;top:510px">TAXES</div>
<div class="abs th" style="left:577px;top:510px">DISTRIBUTION</div>
<div class="abs th" style="left:716px;top:510px">QUANTITY</div>
<div class="abs th" style="left:803px;top:510px">UNIT PRICE</div>
<div class="abs th" style="left:895px;top:510px">SUBTOTAL</div>
<div class="abs th" style="left:954px;top:510px">DESCRIPTION</div>
<div class="abs" style="left:203px;top:542px;width:874px;height:1px;background:#dedede"></div>
<div class="abs" style="left:203px;top:561px;width:874px;height:1px;background:#dedede"></div>
<div class="abs" style="left:203px;top:580px;width:874px;height:1px;background:#dedede"></div>
<div class="abs" style="left:203px;top:599px;width:874px;height:1px;background:#dedede"></div>
<div class="abs" style="left:203px;top:618px;width:874px;height:1px;background:#dedede"></div>
<div class="abs pg" style="left:966px;top:627px"><svg class="abs" style="left:0;top:0" width="12" height="10"><path d="M0.5 5L6 0V10Z M5.5 5L11 0V10Z" fill="#cccccc"/></svg><svg class="abs" style="left:18.5px;top:0" width="6" height="10"><path d="M0 5L5.8 0V10Z" fill="#cccccc"/></svg><div class="abs pgt" style="left:32px;top:-2px">0 - 0 of 0</div><svg class="abs" style="left:85px;top:0" width="6" height="10"><path d="M6 5L0.2 0V10Z" fill="#cccccc"/></svg><svg class="abs" style="left:99px;top:0" width="11" height="10"><path d="M10.5 5L5 0V10Z M5.5 5L0 0V10Z" fill="#cccccc"/></svg></div>
<div class="abs box" style="left:197px;top:648px;width:446px;height:163px"></div>
<div class="abs" style="left:202px;top:654px;font:bold 12px 'Liberation Sans',sans-serif;color:#111">Taxes</div>
<div class="btn" style="left:252px;top:651px;width:52px;height:18px;line-height:17px;font-size:11px">New</div>
<div class="abs pg" style="left:526px;top:655px"><svg class="abs" style="left:0;top:0" width="12" height="10"><path d="M0.5 5L6 0V10Z M5.5 5L11 0V10Z" fill="#cccccc"/></svg><svg class="abs" style="left:18.5px;top:0" width="6" height="10"><path d="M0 5L5.8 0V10Z" fill="#cccccc"/></svg><div class="abs pgt" style="left:32px;top:-2px">0 - 0 of 0</div><svg class="abs" style="left:85px;top:0" width="6" height="10"><path d="M6 5L0.2 0V10Z" fill="#cccccc"/></svg><svg class="abs" style="left:99px;top:0" width="11" height="10"><path d="M10.5 5L5 0V10Z M5.5 5L0 0V10Z" fill="#cccccc"/></svg></div>
<div class="abs thd" style="left:203px;top:673px;width:434px;height:18px"></div>
<div class="abs th" style="left:222px;top:676px">TAX DESCRIPTION</div>
<div class="abs th" style="left:372px;top:676px">TAX ACCOUNT</div>
<div class="abs th" style="left:511px;top:676px">BASE</div>
<div class="abs th" style="left:574px;top:676px">AMOUNT</div>
<div class="abs" style="left:203px;top:709px;width:434px;height:1px;background:#dedede"></div>
<div class="abs" style="left:203px;top:728px;width:434px;height:1px;background:#dedede"></div>
<div class="abs" style="left:203px;top:747px;width:434px;height:1px;background:#dedede"></div>
<div class="abs" style="left:203px;top:766px;width:434px;height:1px;background:#dedede"></div>
<div class="abs" style="left:203px;top:785px;width:434px;height:1px;background:#dedede"></div>
<div class="abs pg" style="left:526px;top:794px"><svg class="abs" style="left:0;top:0" width="12" height="10"><path d="M0.5 5L6 0V10Z M5.5 5L11 0V10Z" fill="#cccccc"/></svg><svg class="abs" style="left:18.5px;top:0" width="6" height="10"><path d="M0 5L5.8 0V10Z" fill="#cccccc"/></svg><div class="abs pgt" style="left:32px;top:-2px">0 - 0 of 0</div><svg class="abs" style="left:85px;top:0" width="6" height="10"><path d="M6 5L0.2 0V10Z" fill="#cccccc"/></svg><svg class="abs" style="left:99px;top:0" width="11" height="10"><path d="M10.5 5L5 0V10Z M5.5 5L0 0V10Z" fill="#cccccc"/></svg></div>
<div class="abtn" style="left:647px;top:648px;width:234px;height:20px"><svg class="abs" style="left:64px;top:3px" width="15" height="16"><g fill="#000"><rect x="2" y="1" width="1" height="6"/><rect x="1" y="2" width="1" height="1"/><rect x="1" y="6" width="3" height="1"/><rect x="5" y="5" width="1" height="2"/><rect x="4" y="7" width="1" height="1"/><rect x="8" y="1" width="3" height="1"/><rect x="11" y="2" width="1" height="2"/><rect x="10" y="4" width="1" height="1"/><rect x="9" y="5" width="1" height="1"/><rect x="8" y="6" width="4" height="1"/><rect x="7" y="2" width="1" height="1"/><rect x="1" y="9" width="1" height="6"/><rect x="1" y="9" width="4" height="1"/><rect x="1" y="11" width="3" height="1"/><rect x="1" y="14" width="4" height="1"/><rect x="6" y="11" width="3" height="1"/><rect x="7" y="10" width="1" height="3"/><rect x="10" y="9" width="3" height="1"/><rect x="13" y="10" width="1" height="1"/><rect x="11" y="11" width="2" height="1"/><rect x="13" y="12" width="1" height="2"/><rect x="10" y="14" width="3" height="1"/></g></svg><span style="position:absolute;left:82px;top:4px">Compute Taxes</span></div>
<div class="lb" style="right:331px;top:652px">Untaxed :</div>
<div class="in ro2" style="left:957px;top:648px;width:126px;height:20px">0.00</div>
<div class="lb" style="right:331px;top:676px">Tax :</div>
<div class="in ro2" style="left:957px;top:672px;width:126px;height:20px">0.00</div>
<div class="lb" style="left:650px;top:700px;letter-spacing:-0.22px">Paid/Reconciled</div><div class="lb q2" style="left:731px;top:695px">?</div><div class="lb" style="left:742px;top:700px">:</div>
<div class="abs" style="left:754px;top:700px;width:13px;height:13px;border:1px solid #c2baa8;background:#fff"></div>
<div class="lb" style="right:331px;top:700px">Total :</div>
<div class="in ro2" style="left:957px;top:696px;width:126px;height:20px">0.00</div>
<div class="lb" style="right:553px;top:724px">State</div><div class="lb q2" style="left:731px;top:719px">?</div><div class="lb" style="left:742px;top:724px">:</div>
<div class="in ro sel" style="left:754px;top:720px;width:127px;height:20px">Draft<div class="abs" style="left:108px;top:2px;width:15px;height:14px;border:1px solid #e2e2e2;background:#e8e8e4;border-radius:2px"><svg class="abs" style="left:2px;top:3px" width="10" height="7"><path d="M1 1L5 5L9 1" stroke="#c4c4c4" stroke-width="1.8" fill="none"/></svg></div></div>
<div class="lb" style="right:349px;top:724px">Residual</div><div class="lb q2" style="left:934px;top:719px">?</div><div class="lb" style="left:945px;top:724px">:</div>
<div class="in ro2" style="left:957px;top:720px;width:126px;height:20px">0.00</div>
<div class="abtn" style="left:647px;top:745px;width:131px;height:19px"><svg class="abs" style="left:38px;top:3px" width="14" height="14"><circle cx="7" cy="7" r="7" fill="#c00808"/><circle cx="7" cy="7" r="5.6" fill="#de1414"/><path d="M4.6 4.6L9.4 9.4M9.4 4.6L4.6 9.4" stroke="#fff" stroke-width="2.6" stroke-linecap="square"/></svg><span style="position:absolute;left:55px;top:3px">Cancel</span></div>
<div class="abtn" style="left:782px;top:745px;width:137px;height:19px"><svg class="abs" style="left:37px;top:2px" width="17" height="17"><defs><linearGradient id="gv" x1="0" y1="0" x2="0" y2="1"><stop offset="0" stop-color="#a6e07a"/><stop offset="0.5" stop-color="#52b820"/><stop offset="1" stop-color="#8ad060"/></linearGradient></defs><path d="M0.6 4.6H6.2V0.8L15.6 8.2L6.2 15.6V11.6H0.6Z" fill="url(#gv)" stroke="#2e8010" stroke-width="1.2"/></svg><span style="position:absolute;left:57px;top:3px">Validate</span></div>
<div class="abtn" style="left:923px;top:745px;width:160px;height:19px"><svg class="abs" style="left:38px;top:2px" width="15" height="17"><path d="M2.8 0.8L7.3 8.2M11.2 0.8L6.7 8.2" stroke="#9a9a9a" stroke-width="1.9" stroke-linecap="round"/><g fill="none" stroke="#d40c0c" stroke-width="2"><ellipse cx="3.6" cy="12.6" rx="3.1" ry="2.3" transform="rotate(-40 3.6 12.6)"/><ellipse cx="10.4" cy="12.6" rx="3.1" ry="2.3" transform="rotate(40 10.4 12.6)"/></g><path d="M6 9.5L7 8.3L8 9.5" stroke="#d40c0c" stroke-width="1.6" fill="none"/></svg><span style="position:absolute;left:55px;top:3px">Split Invoice</span></div>
<div id="right">
 <div class="rh" style="top:0;height:23px;border-top:none">Reports<div class="abs" style="left:158px;top:0;width:1px;height:22px;background:#cfcdcd"></div><div class="abs" style="left:166px;top:3px;font:bold 12px 'Liberation Sans',sans-serif;color:#8a8a8a">&raquo;</div></div>
 <svg class="abs" style="left:11px;top:30px" width="16" height="16" viewBox="0 0 16 16"><rect x="2.5" y="0.5" width="10" height="8" fill="#fafafa" stroke="#8a8a8a"/><path d="M7.5 1.8V6.2M5.5 3L9.5 5M9.5 3L5.5 5M5.3 4H9.7" stroke="#666" stroke-width="0.9"/><rect x="0.5" y="7.5" width="15" height="8" rx="1.5" fill="#e4e4e4" stroke="#8a8a8a"/><rect x="3" y="10.5" width="10" height="2" fill="#9a9a9a"/><rect x="2" y="9" width="1" height="1" fill="#777"/></svg><div class="ri" style="left:29px;top:35px">Open Invoices</div>
 <svg class="abs" style="left:11px;top:54px" width="16" height="16" viewBox="0 0 16 16"><rect x="2.5" y="0.5" width="10" height="8" fill="#fafafa" stroke="#8a8a8a"/><path d="M7.5 1.8V6.2M5.5 3L9.5 5M9.5 3L5.5 5M5.3 4H9.7" stroke="#666" stroke-width="0.9"/><rect x="0.5" y="7.5" width="15" height="8" rx="1.5" fill="#e4e4e4" stroke="#8a8a8a"/><rect x="3" y="10.5" width="10" height="2" fill="#9a9a9a"/><rect x="2" y="9" width="1" height="1" fill="#777"/></svg><div class="ri" style="left:29px;top:59px">Print report</div>
 <div class="rh" style="top:78px">Links</div>
 <div class="ri" style="left:10px;top:108px">Payment Lines</div>
 <div class="ri" style="left:10px;top:127px">Track changes</div>
 <div class="rh" style="top:146px">Attachments</div>
 <div class="btn" style="left:132px;top:176px;width:44px;height:16px;line-height:15px">Add</div>
 <div class="rh" style="top:202px">Customize</div>
 <div class="ri" style="left:10px;top:232px">Manage Views</div>
 <div class="ri" style="left:10px;top:251px">Edit Workflow</div>
 <div class="ri" style="left:10px;top:270px">Customize Object</div>
 <div class="rh" style="top:289px">Other Options</div>
 <div class="ri" style="left:10px;top:319px">Translate</div>
 <div class="ri" style="left:10px;top:338px">View Log</div>
</div>
<div id="footer"><div class="abs" style="left:0;top:0;width:4px;height:24px;background:linear-gradient(90deg,#a8a8a8,#cbcbcb)"></div><div class="abs" style="right:0;top:0;width:4px;height:24px;background:linear-gradient(270deg,#a8a8a8,#cbcbcb)"></div>
<div class="abs ft" style="left:20px;top:8px">socket://admin@localhost:8070</div><div class="abs ft" style="left:187px;top:8px">en</div><div class="abs ft" style="left:593px;top:8px">Powered by openerp.com</div></div>
<div id="taskbar"><div class="abs" style="left:0;top:-1px;width:93px;height:4px;background:linear-gradient(#2a6a1a 0,#2a6a1a 1px,#bcd498 1px,#d0e2aa);border-radius:0 5px 0 0"></div><div class="abs" style="left:1098px;top:0;width:182px;height:4px;background:#fff3c8;border-left:1px solid #8a9a70"></div></div>
</div></body></html>
